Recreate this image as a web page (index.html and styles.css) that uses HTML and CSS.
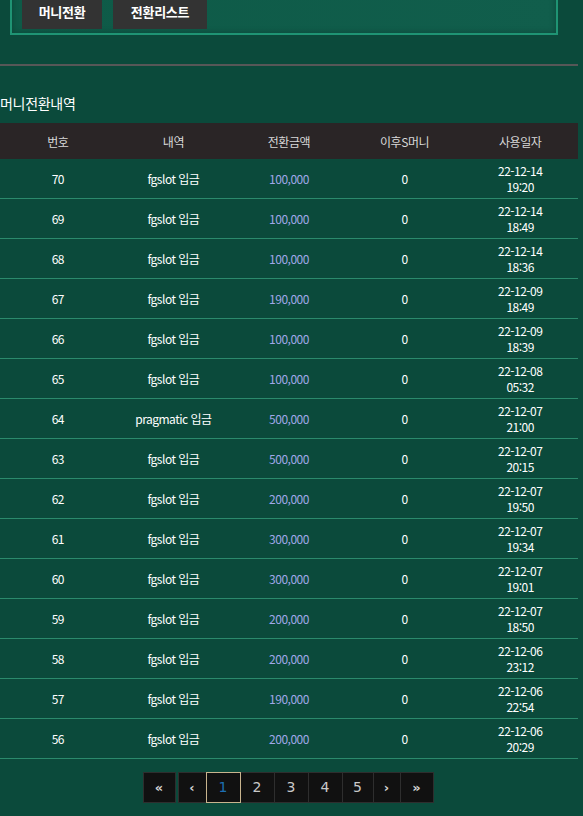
FILE: index.html
```html
<!DOCTYPE html>
<html lang="ko">
<head>
<meta charset="utf-8">
<link rel="stylesheet" href="styles.css">
</head>
<body>
<div class="wrap">
  <div class="tabbox">
    <a class="tab">머니전환</a>
    <a class="tab tab2">전환리스트</a>
  </div>
  <div class="rule"></div>
  <h3 class="title">머니전환내역</h3>
  <table class="list">
    <thead>
      <tr><th>번호</th><th>내역</th><th>전환금액</th><th>이후S머니</th><th>사용일자</th></tr>
    </thead>
    <tbody>
      <tr><td>70</td><td>fgslot 입금</td><td class="amt">100,000</td><td>0</td><td class="date">22-12-14<br>19:20</td></tr>
      <tr><td>69</td><td>fgslot 입금</td><td class="amt">100,000</td><td>0</td><td class="date">22-12-14<br>18:49</td></tr>
      <tr><td>68</td><td>fgslot 입금</td><td class="amt">100,000</td><td>0</td><td class="date">22-12-14<br>18:36</td></tr>
      <tr><td>67</td><td>fgslot 입금</td><td class="amt">190,000</td><td>0</td><td class="date">22-12-09<br>18:49</td></tr>
      <tr><td>66</td><td>fgslot 입금</td><td class="amt">100,000</td><td>0</td><td class="date">22-12-09<br>18:39</td></tr>
      <tr><td>65</td><td>fgslot 입금</td><td class="amt">100,000</td><td>0</td><td class="date">22-12-08<br>05:32</td></tr>
      <tr><td>64</td><td>pragmatic 입금</td><td class="amt">500,000</td><td>0</td><td class="date">22-12-07<br>21:00</td></tr>
      <tr><td>63</td><td>fgslot 입금</td><td class="amt">500,000</td><td>0</td><td class="date">22-12-07<br>20:15</td></tr>
      <tr><td>62</td><td>fgslot 입금</td><td class="amt">200,000</td><td>0</td><td class="date">22-12-07<br>19:50</td></tr>
      <tr><td>61</td><td>fgslot 입금</td><td class="amt">300,000</td><td>0</td><td class="date">22-12-07<br>19:34</td></tr>
      <tr><td>60</td><td>fgslot 입금</td><td class="amt">300,000</td><td>0</td><td class="date">22-12-07<br>19:01</td></tr>
      <tr><td>59</td><td>fgslot 입금</td><td class="amt">200,000</td><td>0</td><td class="date">22-12-07<br>18:50</td></tr>
      <tr><td>58</td><td>fgslot 입금</td><td class="amt">200,000</td><td>0</td><td class="date">22-12-06<br>23:12</td></tr>
      <tr><td>57</td><td>fgslot 입금</td><td class="amt">190,000</td><td>0</td><td class="date">22-12-06<br>22:54</td></tr>
      <tr><td>56</td><td>fgslot 입금</td><td class="amt">200,000</td><td>0</td><td class="date">22-12-06<br>20:29</td></tr>
    </tbody>
  </table>
  <div class="pager">
    <a class="pg first">«</a>
    <a class="pg prev">‹</a>
    <a class="pg num active">1</a>
    <a class="pg num">2</a>
    <a class="pg num">3</a>
    <a class="pg num">4</a>
    <a class="pg num n5">5</a>
    <a class="pg next">›</a>
    <a class="pg last">»</a>
  </div>
</div>
</body>
</html>
```
FILE: styles.css
```css
html, body {
  margin: 0;
  padding: 0;
  background: #0b4a3b;
  color: #ffffff;
  font-family: "Noto Sans CJK KR", "Noto Sans", sans-serif;
  font-size: 12px;
  overflow: hidden;
}

.wrap {
  width: 578px;
}

.tabbox {
  margin: -18px 0 0 10px;
  width: 524px;
  border: 2px solid #1f9474;
  padding: 10px 10px 4px 10px;
  background: linear-gradient(90deg, #0e5a47 0%, #115e4c 100%);
  box-shadow: inset 0 0 6px rgba(0, 0, 0, 0.25);
  display: flex;
  gap: 11px;
}

.tab {
  display: block;
  height: 35px;
  line-height: 35px;
  background: #333333;
  color: #ffffff;
  font-weight: bold;
  font-size: 13px;
  text-align: center;
  letter-spacing: -0.3px;
}

.tab:first-child { width: 80px; }
.tab2 { width: 94px; }

.rule {
  margin-top: 29px;
  height: 2px;
  background: #575757;
}

.title {
  margin: 27px 0 9px 0;
  height: 21px;
  line-height: 21px;
  font-size: 14px;
  font-weight: normal;
  color: #ffffff;
  letter-spacing: -0.3px;
}

.list {
  width: 578px;
  border-collapse: collapse;
  table-layout: fixed;
}

.list th {
  height: 36px;
  padding: 0;
  background: #2a2526;
  color: #d8d8d8;
  font-weight: normal;
  font-size: 12px;
  text-align: center;
  letter-spacing: -0.4px;
}

.list td {
  height: 39px;
  padding: 0;
  border-bottom: 1px solid #2b8a6c;
  text-align: center;
  color: #ffffff;
  font-size: 12px;
  letter-spacing: -0.5px;
  line-height: 14px;
}

.list td.date {
  line-height: 16px;
}

.list td.amt {
  color: #a0a8e8;
}

.pager {
  margin-top: 13px;
  display: flex;
  justify-content: center;
  padding-right: 1px;
}

.pg {
  display: block;
  box-sizing: border-box;
  height: 31px;
  line-height: 29px;
  border: 1px solid #2e2e2e;
  background: #111111;
  color: #c9c9c9;
  text-align: center;
  font-family: "DejaVu Sans", sans-serif;
  font-size: 12px;
  margin-left: -1px;
}

.pg.first, .pg.prev, .pg.next, .pg.last {
  font-size: 13px;
  font-weight: bold;
  color: #d4d4d4;
}

.pg.first { width: 33px; margin-right: 3px; }
.pg.prev { width: 29px; }
.pg.num { width: 35px; font-size: 14px; }
.pg.n5 { width: 32px; }
.pg.next { width: 28px; }
.pg.last { width: 34px; }

.pg.active {
  border-color: #c8b48e;
  color: #1d6fb3;
  position: relative;
}
```
